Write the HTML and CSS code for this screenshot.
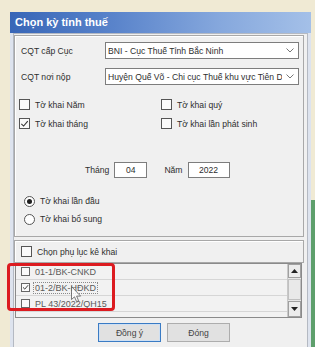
FILE: index.html
```html
<!DOCTYPE html>
<html>
<head>
<meta charset="utf-8">
<link rel="stylesheet" href="styles.css">
</head>
<body>
<div class="dialog">
  <div class="titlebar">Chọn kỳ tính thuế</div>
  <div class="client">
    <div class="group g1">
      <div class="field f1">
        <span class="flabel">CQT cấp Cục</span>
        <div class="select"><span class="stext">BNI - Cục Thuế Tỉnh Bắc Ninh</span><svg class="chev" width="8" height="5" viewBox="0 0 8 5"><path d="M0.5 0.5 L4 4 L7.5 0.5" fill="none" stroke="#777" stroke-width="1"/></svg></div>
      </div>
      <div class="field f2">
        <span class="flabel">CQT nơi nộp</span>
        <div class="select"><span class="stext">Huyện Quế Võ - Chi cục Thuế khu vực Tiên D</span><svg class="chev" width="8" height="5" viewBox="0 0 8 5"><path d="M0.5 0.5 L4 4 L7.5 0.5" fill="none" stroke="#777" stroke-width="1"/></svg></div>
      </div>
      <div class="checks">
        <div class="chk"><span class="box"></span><span>Tờ khai Năm</span></div>
        <div class="chk"><span class="box"></span><span>Tờ khai quý</span></div>
        <div class="chk"><span class="box"><svg width="10" height="10" viewBox="0 0 10 10"><path d="M1.5 4.8 L4 7.3 L8.6 1.8" fill="none" stroke="#333" stroke-width="1.2"/></svg></span><span>Tờ khai tháng</span></div>
        <div class="chk"><span class="box"></span><span>Tờ khai lần phát sinh</span></div>
      </div>
      <div class="period">
        <span class="plabel">Tháng</span>
        <div class="input month">04</div>
        <span class="plabel year-label">Năm</span>
        <div class="input year">2022</div>
      </div>
      <div class="radios">
        <div class="radio"><span class="rb on"></span><span>Tờ khai lần đầu</span></div>
        <div class="radio"><span class="rb"></span><span>Tờ khai bổ sung</span></div>
      </div>
    </div>
    <div class="g2">
      <div class="g2head"><span class="box"></span><span>Chọn phụ lục kê khai</span></div>
      <div class="list">
        <div class="rows">
          <div class="row"><span class="box sm"></span><span class="rtext">01-1/BK-CNKD</span></div>
          <div class="row"><span class="box sm"><svg width="9" height="9" viewBox="0 0 9 9"><path d="M1.3 4.3 L3.6 6.6 L7.8 1.6" fill="none" stroke="#333" stroke-width="1.2"/></svg></span><span class="rtext focus">01-2/BK-HĐKD</span></div>
          <div class="row"><span class="box sm"></span><span class="rtext">PL 43/2022/QH15</span></div>
        </div>
        <div class="scroll">
          <div class="sbtn up"><svg width="7" height="4" viewBox="0 0 7 4"><path d="M0 4 L3.5 0 L7 4 Z" fill="#222"/></svg></div>
          <div class="thumb"></div>
          <div class="sbtn down"><svg width="7" height="4" viewBox="0 0 7 4"><path d="M0 0 L3.5 4 L7 0 Z" fill="#222"/></svg></div>
        </div>
      </div>
    </div>
    <div class="buttons">
      <div class="btn default">Đồng ý</div>
      <div class="btn">Đóng</div>
    </div>
  </div>
</div>
<div class="highlight"></div>
<svg class="cursor" width="11" height="17" viewBox="0 0 11 17"><path d="M0.5 0.5 L0.5 13.5 L3.5 10.8 L5.6 15.6 L7.6 14.7 L5.6 10.1 L9.6 10.1 Z" fill="rgba(255,255,255,0.75)" stroke="rgba(90,90,90,0.8)" stroke-width="1"/></svg>
</body>
</html>
```

FILE: styles.css
```css
html, body {
  margin: 0;
  padding: 0;
}
body {
  width: 315px;
  height: 347px;
  overflow: hidden;
  position: relative;
  box-sizing: border-box;
  padding: 12px 0 0 10px;
  background:
    linear-gradient(#5e9f6c, #5e9f6c) right 200px / 4px 147px no-repeat,
    #f0ead4;
  font-family: "Liberation Sans", Arial, sans-serif;
  font-size: 8.6px;
  color: #2e2e2e;
}
.dialog {
  width: 301px;
  height: 340px;
  background: #dde3ee;
  box-sizing: border-box;
}
.titlebar {
  height: 21px;
  line-height: 21px;
  padding-left: 5px;
  color: #fff;
  font-weight: bold;
  font-size: 11px;
  background: linear-gradient(90deg, #3866b7 0%, #5a84cb 35%, #86a8dd 70%, #a4c0e8 100%);
}
.client {
  margin: 0 3px;
  height: 319px;
  box-sizing: border-box;
  background: #f0f0f0;
  border: 1px solid #b4b9c2;
  border-bottom: none;
  padding-top: 1px;
}
.group {
  width: 290px;
  box-sizing: border-box;
  border: 1px solid #a8a8a8;
  box-shadow: inset 1px 1px 0 #fff;
}
.g1 {
  height: 202px;
}
.field {
  display: flex;
  align-items: center;
  padding-left: 6px;
}
.f1 { margin-top: 6px; }
.f2 { margin-top: 9px; }
.flabel {
  width: 84px;
  flex: none;
}
.select {
  width: 194px;
  height: 17px;
  box-sizing: border-box;
  border: 1px solid #7d7d7d;
  background: #fff;
  display: flex;
  align-items: center;
  padding-left: 2px;
  padding-right: 4px;
}
.stext {
  flex: 1;
  white-space: nowrap;
  overflow: hidden;
}
.chev {
  flex: none;
  margin-left: 4px;
}
.checks {
  margin-top: 10px;
  padding-left: 4px;
  display: grid;
  grid-template-columns: 142px 1fr;
  grid-auto-rows: 19px;
}
.chk {
  display: flex;
  align-items: center;
  gap: 5px;
}
.box {
  width: 11px;
  height: 11px;
  box-sizing: border-box;
  border: 1px solid #555;
  background: #fafafa;
  flex: none;
  display: flex;
  align-items: center;
  justify-content: center;
}
.box svg { display: block; }
.box.sm {
  width: 9px;
  height: 9px;
  border-color: #666;
}
.period {
  margin-top: 29px;
  display: flex;
  align-items: center;
  padding-left: 70px;
}
.plabel { margin-right: 5px; }
.year-label { margin-left: 17px; }
.input {
  height: 16px;
  box-sizing: border-box;
  border: 1px solid #7d7d7d;
  background: #fff;
  text-align: center;
  line-height: 14px;
}
.month { width: 33px; }
.year { width: 42px; }
.radios {
  margin-top: 14px;
  padding-left: 9px;
}
.radio {
  height: 18px;
  display: flex;
  align-items: center;
  gap: 5px;
}
.rb {
  width: 11px;
  height: 11px;
  box-sizing: border-box;
  border: 1px solid #555;
  border-radius: 50%;
  background: #fff;
  display: flex;
  align-items: center;
  justify-content: center;
}
.rb.on::after {
  content: "";
  width: 5px;
  height: 5px;
  border-radius: 50%;
  background: #1e1e1e;
}
.g2 {
  margin-top: 3px;
}
.g2head {
  width: 290px;
  height: 23px;
  box-sizing: border-box;
  border: 1px solid #a8a8a8;
  box-shadow: inset 1px 1px 0 #fff;
  display: flex;
  align-items: center;
  gap: 5px;
  padding-left: 6px;
}
.list {
  margin-left: 1px;
  width: 287px;
  height: 55px;
  box-sizing: border-box;
  border: 1px solid #8a8a8a;
  background: #f2f2f2;
  display: flex;
}
.rows {
  flex: 1;
}
.row {
  height: 16px;
  box-sizing: border-box;
  border-bottom: 1px solid #d6d6d6;
  display: flex;
  align-items: center;
  padding-left: 5px;
  gap: 5px;
  color: #5a5a5a;
  font-size: 9px;
}
.rtext {
  padding: 0 1px;
  line-height: 10px;
  border: 1px solid transparent;
  margin-left: -2px;
}
.rtext.focus {
  border: 1px dotted #8a8a8a;
}
.scroll {
  width: 13px;
  flex: none;
  display: flex;
  flex-direction: column;
  background: #e6e6e6;
  border-left: 1px solid #c8c8c8;
}
.sbtn {
  height: 14px;
  box-sizing: border-box;
  border: 1px solid #a0a0a0;
  background: #ececec;
  display: flex;
  align-items: center;
  justify-content: center;
}
.sbtn svg { display: block; }
.thumb {
  flex: 1;
  margin: 1px 0;
  border: 1px solid #c0c0c0;
  background: #e9e9e9;
}
.down { height: 16px; }
.buttons {
  margin-top: 5px;
  padding-left: 84px;
  display: flex;
  gap: 6px;
}
.btn {
  width: 63px;
  height: 19px;
  box-sizing: border-box;
  border: 1px solid #adadad;
  background: #e1e1e1;
  display: flex;
  align-items: center;
  justify-content: center;
  color: #444;
}
.btn.default {
  border-color: #3a7bc4;
  box-shadow: inset 0 0 0 1px #cfe0f3;
}
.highlight {
  position: absolute;
  left: 7px;
  top: 263px;
  width: 108px;
  height: 48px;
  box-sizing: border-box;
  border: 3px solid #dc1b20;
  border-radius: 4px;
}
.cursor {
  position: absolute;
  left: 71px;
  top: 286px;
}
```
